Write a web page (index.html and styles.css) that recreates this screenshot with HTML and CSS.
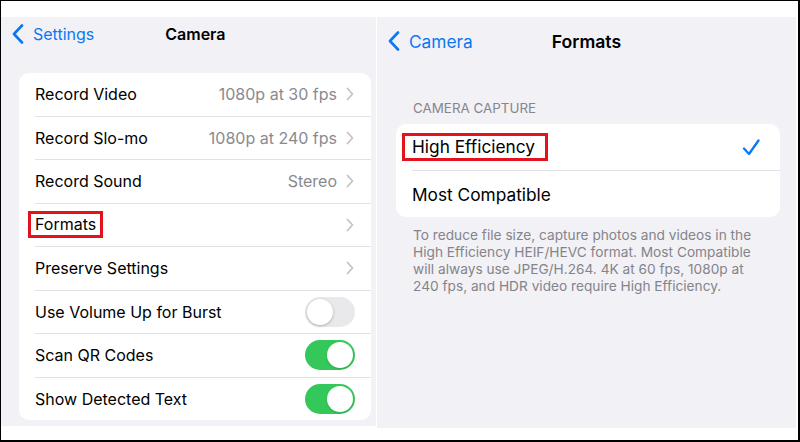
FILE: index.html
```html
<!DOCTYPE html>
<html>
<head>
<meta charset="utf-8">
<link rel="stylesheet" href="styles.css">
</head>
<body>
<div class="frame">
  <div class="panels">
    <section class="panel panel-left">
      <div class="nav">
        <div class="back">
          <svg class="back-chev" width="12" height="20" viewBox="0 0 12 20"><path d="M10 1.5 L2 10 L10 18.5" fill="none" stroke="#0a78f5" stroke-width="2.6" stroke-linecap="round" stroke-linejoin="round"/></svg>
          <span>Settings</span>
        </div>
        <div class="title title-left">Camera</div>
      </div>
      <div class="card card-left">
        <div class="row"><span class="label">Record Video</span><span class="value">1080p at 30 fps</span><svg class="chev" width="8" height="14" viewBox="0 0 8 14"><path d="M1.5 1.5 L6.5 7 L1.5 12.5" fill="none" stroke="#c4c4c7" stroke-width="1.8" stroke-linecap="round" stroke-linejoin="round"/></svg></div>
        <div class="row"><span class="label">Record Slo-mo</span><span class="value">1080p at 240 fps</span><svg class="chev" width="8" height="14" viewBox="0 0 8 14"><path d="M1.5 1.5 L6.5 7 L1.5 12.5" fill="none" stroke="#c4c4c7" stroke-width="1.8" stroke-linecap="round" stroke-linejoin="round"/></svg></div>
        <div class="row"><span class="label">Record Sound</span><span class="value">Stereo</span><svg class="chev" width="8" height="14" viewBox="0 0 8 14"><path d="M1.5 1.5 L6.5 7 L1.5 12.5" fill="none" stroke="#c4c4c7" stroke-width="1.8" stroke-linecap="round" stroke-linejoin="round"/></svg></div>
        <div class="row"><span class="label"><span class="hl hl-formats">Formats</span></span><svg class="chev" width="8" height="14" viewBox="0 0 8 14"><path d="M1.5 1.5 L6.5 7 L1.5 12.5" fill="none" stroke="#c4c4c7" stroke-width="1.8" stroke-linecap="round" stroke-linejoin="round"/></svg></div>
        <div class="row"><span class="label">Preserve Settings</span><svg class="chev" width="8" height="14" viewBox="0 0 8 14"><path d="M1.5 1.5 L6.5 7 L1.5 12.5" fill="none" stroke="#c4c4c7" stroke-width="1.8" stroke-linecap="round" stroke-linejoin="round"/></svg></div>
        <div class="row"><span class="label">Use Volume Up for Burst</span><span class="toggle"><span class="knob"></span></span></div>
        <div class="row"><span class="label">Scan QR Codes</span><span class="toggle on"><span class="knob"></span></span></div>
        <div class="row"><span class="label">Show Detected Text</span><span class="toggle on"><span class="knob"></span></span></div>
      </div>
    </section>
    <section class="panel panel-right">
      <div class="nav nav-right">
        <div class="back">
          <svg class="back-chev" width="12" height="20" viewBox="0 0 12 20"><path d="M10 1.5 L2 10 L10 18.5" fill="none" stroke="#0a78f5" stroke-width="2.6" stroke-linecap="round" stroke-linejoin="round"/></svg>
          <span>Camera</span>
        </div>
        <div class="title title-right">Formats</div>
      </div>
      <div class="section-head">CAMERA CAPTURE</div>
      <div class="card card-right">
        <div class="row row-tall"><span class="label"><span class="hl hl-eff">High Efficiency</span></span><svg class="check" width="18" height="17" viewBox="0 0 18 17"><path d="M2 9.5 L7 15 L16.5 1.5" fill="none" stroke="#0a78f5" stroke-width="2.3" stroke-linecap="round" stroke-linejoin="round"/></svg></div>
        <div class="row row-tall"><span class="label">Most Compatible</span></div>
      </div>
      <p class="footer">To reduce file size, capture photos and videos in the High Efficiency HEIF/HEVC format. Most Compatible will always use JPEG/H.264. 4K at 60 fps, 1080p at 240 fps, and HDR video require High Efficiency.</p>
    </section>
  </div>
</div>
</body>
</html>
```

FILE: styles.css
```css
* { box-sizing: border-box; }
html, body { margin: 0; padding: 0; background: #fff; }
body {
  font-family: Inter, "Liberation Sans", sans-serif;
  color: #000;
}
.frame {
  width: 800px;
  height: 442px;
  border-style: solid;
  border-color: #000;
  border-width: 1px 2px 2px 1px;
  background: #fff;
  padding-top: 16px;
}
.panels {
  display: flex;
  align-items: flex-start;
  gap: 1px;
}
.panel {
  background: #f2f1f6;
}
.panel-left {
  width: 375px;
  height: 409px;
  font-size: 16px;
}
.panel-right {
  width: 419px;
  height: 411px;
  font-size: 17.3px;
}
.nav {
  height: 34px;
  display: flex;
  align-items: center;
  padding-left: 11px;
}
.nav-right {
  margin-top: 7px;
}
.back {
  display: flex;
  align-items: center;
  gap: 9px;
  color: #0a78f5;
}
.back-chev { display: block; }
.title {
  font-weight: 600;
}
.title-left { margin-left: 71px; }
.title-right { margin-left: 79px; font-size: 17.6px; }

.card {
  background: #fff;
  border-radius: 10px;
  display: flex;
  flex-direction: column;
  overflow: hidden;
}
.card-left {
  margin: 22px 0 0 18px;
  width: 352px;
  height: 347px;
}
.row {
  flex: 1;
  display: flex;
  align-items: center;
  margin-left: 16px;
  padding-right: 16px;
  border-bottom: 1px solid #e2e2e6;
}
.row:last-child { border-bottom: none; }
.label { flex: 1; white-space: nowrap; }
.value { color: #8a8a8e; margin-right: 9px; }
.chev { display: block; margin-right: 1px; }

.hl {
  display: inline-block;
  border: 3px solid #e3121c;
  line-height: 21px;
}
.hl-formats {
  padding: 0 4px;
  margin-left: -7px;
}
.hl-eff {
  padding: 0 10px 1px 7px;
  margin-left: -10px;
}

.toggle {
  width: 50px;
  height: 30px;
  border-radius: 15px;
  background: #e9e9eb;
  position: relative;
  display: block;
}
.toggle .knob {
  position: absolute;
  top: 2px;
  left: 2px;
  width: 26px;
  height: 26px;
  border-radius: 50%;
  background: #fff;
  box-shadow: 0 1px 3px rgba(0,0,0,0.25);
}
.toggle.on { background: #34c759; }
.toggle.on .knob { left: 22px; box-shadow: 0 1px 2px rgba(0,0,0,0.15); }

.section-head {
  margin: 42px 0 0 36px;
  font-size: 13.4px;
  line-height: 16px;
  color: #86868b;
}
.card-right {
  margin: 8px 0 0 19px;
  width: 384px;
  height: 93px;
}
.row-tall { padding-right: 20px; }
.check { display: block; }
.footer {
  margin: 10px 0 0 36px;
  width: 346px;
  font-size: 13.7px;
  line-height: 17px;
  color: #84848a;
}
```
